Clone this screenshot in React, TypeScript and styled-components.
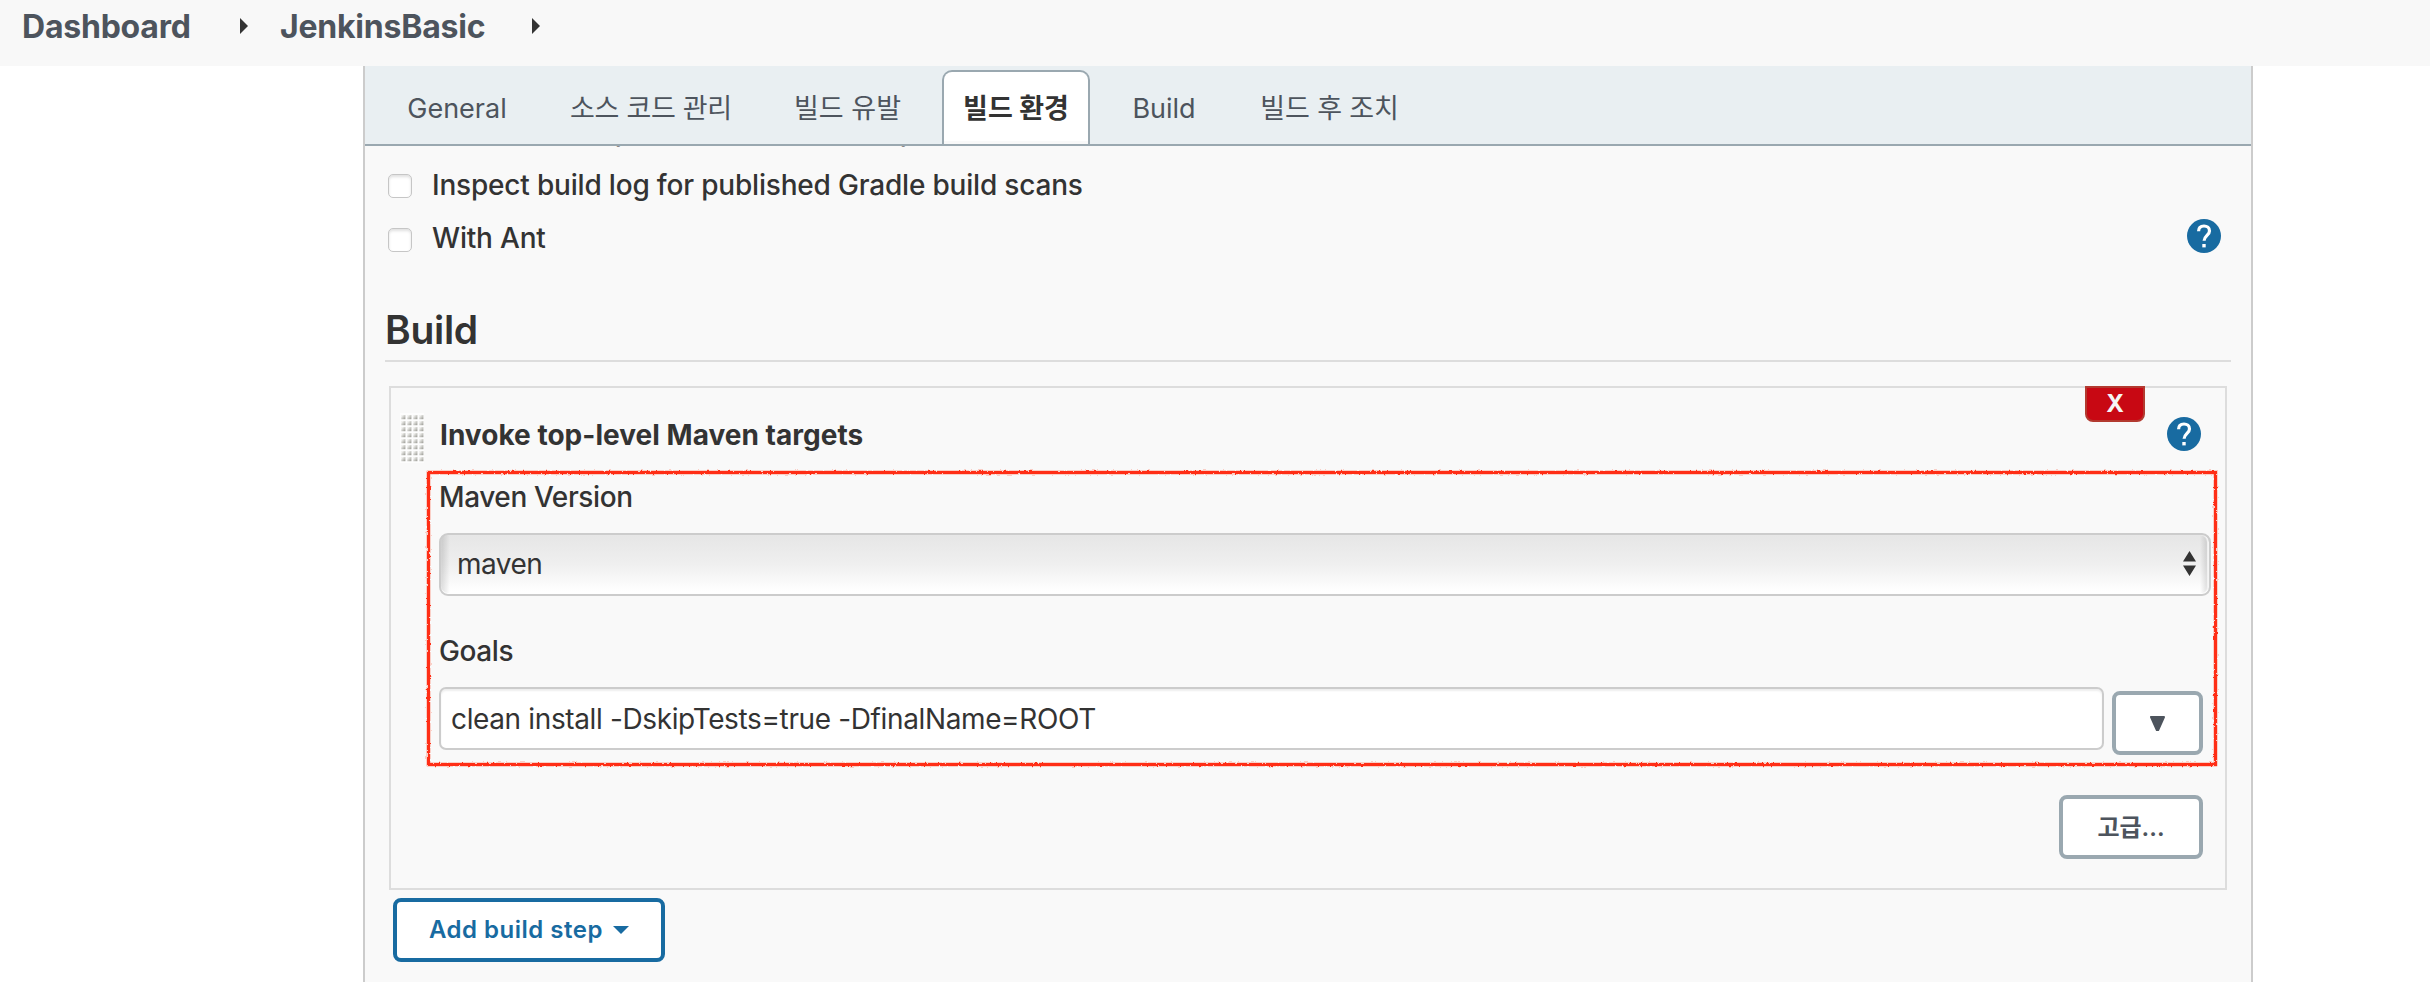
import React from "react";
import styled, { createGlobalStyle } from "styled-components";

const GlobalStyle = createGlobalStyle`
  *, *::before, *::after { box-sizing: border-box; }
  html, body { margin: 0; padding: 0; }
  body {
    width: 2430px;
    height: 982px;
    overflow: hidden;
    background: #fff;
    color: #333;
    font-family: Inter, "Noto Sans CJK KR", sans-serif;
    font-size: 28px;
  }
`;

const Page = styled.div`
  display: flex;
  flex-direction: column;
  height: 982px;
`;

const Breadcrumbs = styled.nav`
  display: flex;
  flex: none;
  height: 66px;
  padding-left: 22px;
  background: #f8f8f8;
`;

const Crumb = styled.span<{ $width: number }>`
  width: ${(p) => p.$width}px;
  font-size: 32px;
  font-weight: 700;
  line-height: 54px;
  letter-spacing: -0.22px;
  color: #4d545d;
  white-space: nowrap;
`;

const CrumbArrow = styled.svg<{ $gap?: number }>`
  display: block;
  width: 8px;
  height: 16px;
  margin: 18px ${(p) => p.$gap ?? 0}px 0 0;
  fill: #333;
`;

const Panel = styled.main`
  display: flex;
  flex-direction: column;
  flex: 1;
  min-height: 0;
  width: 1890px;
  margin-left: 363px;
  border: solid #ccc;
  border-width: 0 2px;
  background: #f9f9f9;
`;

const TabBar = styled.div`
  display: flex;
  flex: none;
  height: 80px;
  padding: 4px 0 0 22px;
  border-bottom: 2px solid #9aa8b0;
  background: #e9eff2;
`;

const Tab = styled.div<{ $width: number; $active?: boolean; $spacing?: number }>`
  width: ${(p) => p.$width}px;
  height: 74px;
  border: 2px solid ${(p) => (p.$active ? "#9aa8b0" : "transparent")};
  border-bottom: 0;
  border-radius: 10px 10px 0 0;
  background: ${(p) => (p.$active ? "linear-gradient(#fff 69px, #f9f9f9 69px)" : "transparent")};
  color: ${(p) => (p.$active ? "#333" : "#4d545d")};
  font-size: 27px;
  font-weight: ${(p) => (p.$active ? 700 : 400)};
  line-height: 73px;
  letter-spacing: ${(p) => p.$spacing ?? 0}px;
  text-align: center;
  white-space: nowrap;
`;

const Scroller = styled.div`
  flex: 1;
  min-height: 0;
  overflow: hidden;
`;

const Options = styled.div`
  margin-top: -42px;
  padding: 0 30px 0 23px;
`;

const Checkbox = styled.span`
  width: 24px;
  height: 24px;
  margin: 2px 20px 0 0;
  border: 1.5px solid #c6c6c6;
  border-radius: 5px;
  background: #fff;
  box-shadow: inset 0 2px 3px rgba(0, 0, 0, 0.12);
`;

const OptionText = styled.span`
  flex: 1;
  font-weight: 500;
  letter-spacing: -0.19px;
`;

const HelpCircle = styled.svg`
  display: block;
  flex: none;
  width: 34px;
  height: 34px;
`;

const OptionRow = styled.label`
  display: flex;
  align-items: center;
  height: 54px;

  &:last-child { height: 53px; }
  &:last-child ${OptionText} { margin-bottom: 2px; }
  ${HelpCircle} { margin-bottom: 5px; }
`;

const Heading = styled.h2`
  width: 1846px;
  height: 59px;
  margin: 38px 0 0 20px;
  border-bottom: 2px solid #ddd;
  font-size: 39px;
  font-weight: 600;
  line-height: 53px;
  letter-spacing: -0.3px;
`;

const StepCard = styled.section`
  position: relative;
  width: 1838px;
  height: 504px;
  margin: 24px 0 0 24px;
  padding-left: 9px;
  border: 2px solid #ddd;
`;

const StepHeader = styled.div`
  display: flex;
  height: 84px;
  padding: 25px 24px 0 0;
`;

const DragHandle = styled.svg`
  display: block;
  width: 24px;
  height: 50px;
  margin-right: 16px;
`;

const StepTitle = styled.div`
  flex: 1;
  font-weight: 700;
  line-height: 44px;
  letter-spacing: 0.03px;
`;

const HeaderHelp = styled.div`
  margin: 4px 0 0;
`;

const RemoveButton = styled.button`
  position: absolute;
  top: -2px;
  left: 1694px;
  width: 60px;
  height: 36px;
  padding: 0;
  border: 2px solid #b33a30;
  border-radius: 0 0 8px 8px;
  background: #c80813;
  color: #f5f5f5;
  font: 700 24px/32px Inter, sans-serif;
`;

const Fields = styled.div`
  padding-left: 39px;
`;

const FieldLabel = styled.div<{ $top: number }>`
  height: 44px;
  margin: ${(p) => p.$top}px 0 14px;
  font-weight: 500;
  line-height: 44px;
  letter-spacing: -0.4px;
`;

const SelectBox = styled.div`
  display: flex;
  align-items: center;
  justify-content: space-between;
  width: 1772px;
  height: 63px;
  padding: 0 13px 2px 16px;
  border: 2px solid #ccc;
  border-radius: 9px;
  background:
    linear-gradient(90deg, rgba(0, 0, 0, 0.13), transparent 9px),
    linear-gradient(270deg, rgba(0, 0, 0, 0.15), transparent 9px),
    linear-gradient(#e6e6e6, #efefef 50%, #fff 95%);
  box-shadow: inset 0 -1px 1px #fff, inset -2px 0 1px #f4f4f4;
  letter-spacing: -0.5px;
`;

const SelectArrows = styled.svg`
  display: block;
  width: 13px;
  height: 25px;
  fill: #333;
`;

const InputRow = styled.div`
  display: flex;
  gap: 8px;
`;

const TextInput = styled.div`
  width: 1665px;
  height: 63px;
  padding-left: 10px;
  border: 2px solid #ccc;
  border-radius: 7px;
  background: #fff;
  box-shadow: inset 0 2px 2px rgba(0, 0, 0, 0.07);
  line-height: 60px;
  letter-spacing: -0.37px;
  white-space: nowrap;
`;

const Button = styled.button<{ $width: number; $primary?: boolean }>`
  display: flex;
  align-items: center;
  justify-content: center;
  width: ${(p) => p.$width}px;
  height: 64px;
  padding: 0 0 ${(p) => (p.$primary ? 1 : 4)}px;
  border: 4px solid ${(p) => (p.$primary ? "#186ba1" : "#9aa8b0")};
  border-radius: 8px;
  background: #fff;
  color: ${(p) => (p.$primary ? "#186ba1" : "#4d545d")};
  font-family: Inter, "Noto Sans CJK KR", sans-serif;
  font-size: 24px;
  font-weight: 600;
  letter-spacing: ${(p) => (p.$primary ? 0.5 : 0)}px;
  white-space: nowrap;
`;

const ExpandButton = styled(Button)`
  margin-top: 4px;
  padding: 0;
`;

const AdvancedRow = styled.div`
  display: flex;
  justify-content: flex-end;
  margin-top: 40px;
  padding-right: 22px;
`;

const AddRow = styled.div`
  padding: 8px 0 0 28px;
`;

const Caret = styled.svg`
  display: block;
  width: 16px;
  height: 8px;
  margin-left: 10px;
  fill: #186ba1;
`;

const Highlight = styled.svg`
  position: absolute;
  top: 78px;
  left: 30px;
  width: 1804px;
  height: 308px;
  pointer-events: none;
`;

const Help = () => (
  <HelpCircle viewBox="0 0 34 34">
    <circle cx="17" cy="17" r="17" fill="#186ba1" />
    <path
      d="M11.6 12.3C11.6 8.7 14 7 17 7s5.5 1.9 5.5 4.9c0 4.3-5.2 4.7-5.4 9.8"
      fill="none"
      stroke="#fff"
      strokeWidth="3.2"
    />
    <path d="M15.3 25h3.4v3.4h-3.4z" fill="#fff" />
  </HelpCircle>
);

const Handle = () => (
  <DragHandle viewBox="0 0 24 50">
    <defs>
      <linearGradient id="dot" x1="0" y1="0" x2="1" y2="1">
        <stop offset="0.2" stopColor="#f0f0ee" />
        <stop offset="1" stopColor="#96968f" />
      </linearGradient>
    </defs>
    <path d="M0 0h24v50H0z" fill="#fdfdfd" />
    {Array.from({ length: 32 }, (_, i) => (
      <rect key={i} x={1.2 + (i % 4) * 6} y={2 + Math.floor(i / 4) * 6} width="4.2" height="4.2" fill="url(#dot)" />
    ))}
  </DragHandle>
);

export default function App() {
  return (
    <>
      <GlobalStyle />
      <Page>
        <Breadcrumbs>
          <Crumb $width={218}>Dashboard</Crumb>
          <CrumbArrow $gap={32} viewBox="0 0 8 16"><path d="M0 0l8 8-8 8z" /></CrumbArrow>
          <Crumb $width={252}>JenkinsBasic</Crumb>
          <CrumbArrow viewBox="0 0 8 16"><path d="M0 0l8 8-8 8z" /></CrumbArrow>
        </Breadcrumbs>
        <Panel>
          <TabBar>
            <Tab $width={140}>General</Tab>
            <Tab $width={248} $spacing={-0.3}>소스 코드 관리</Tab>
            <Tab $width={145}>빌드 유발</Tab>
            <Tab $width={22} />
            <Tab $width={148} $active>빌드 환경</Tab>
            <Tab $width={148}>Build</Tab>
            <Tab $width={183} $spacing={-0.1}>빌드 후 조치</Tab>
          </TabBar>
          <Scroller>
            <Options>
              <OptionRow><Checkbox /><OptionText>Add timestamps to the Console Output</OptionText></OptionRow>
              <OptionRow><Checkbox /><OptionText>Inspect build log for published Gradle build scans</OptionText></OptionRow>
              <OptionRow><Checkbox /><OptionText>With Ant</OptionText><Help /></OptionRow>
            </Options>
            <Heading>Build</Heading>
            <StepCard>
              <StepHeader>
                <Handle />
                <StepTitle>Invoke top-level Maven targets</StepTitle>
                <HeaderHelp><Help /></HeaderHelp>
              </StepHeader>
              <RemoveButton>X</RemoveButton>
              <Fields>
                <FieldLabel $top={3}>Maven Version</FieldLabel>
                <SelectBox>
                  maven
                  <SelectArrows viewBox="0 0 13 25"><path d="M6.5 0L13 10.5H0zM0 14.5h13L6.5 25z" /></SelectArrows>
                </SelectBox>
                <FieldLabel $top={33}>Goals</FieldLabel>
                <InputRow>
                  <TextInput>clean install -DskipTests=true -DfinalName=ROOT</TextInput>
                  <ExpandButton $width={91}>
                    <svg width="15" height="15" viewBox="0 0 15 15">
                      <path d="M1 1h13L8.2 14H6.8z" fill="#4d545d" stroke="#4d545d" strokeWidth="2" strokeLinejoin="round" />
                    </svg>
                  </ExpandButton>
                </InputRow>
              </Fields>
              <AdvancedRow><Button $width={144}>고급...</Button></AdvancedRow>
              <Highlight viewBox="0 0 1804 308">
                <defs>
                  <filter id="rough" x="0" y="0" width="1804" height="308" filterUnits="userSpaceOnUse">
                    <feTurbulence type="fractalNoise" baseFrequency="0.35" numOctaves="2" seed="4" />
                    <feDisplacementMap in="SourceGraphic" scale="2.6" xChannelSelector="R" yChannelSelector="G" />
                  </filter>
                </defs>
                <rect x="7.5" y="6.5" width="1787" height="292" fill="none" stroke="#ff2d16" strokeWidth="3.4" filter="url(#rough)" />
              </Highlight>
            </StepCard>
            <AddRow>
              <Button $width={272} $primary>
                Add build step
                <Caret viewBox="0 0 16 8"><path d="M0 0h16L8 8z" /></Caret>
              </Button>
            </AddRow>
          </Scroller>
        </Panel>
      </Page>
    </>
  );
}
